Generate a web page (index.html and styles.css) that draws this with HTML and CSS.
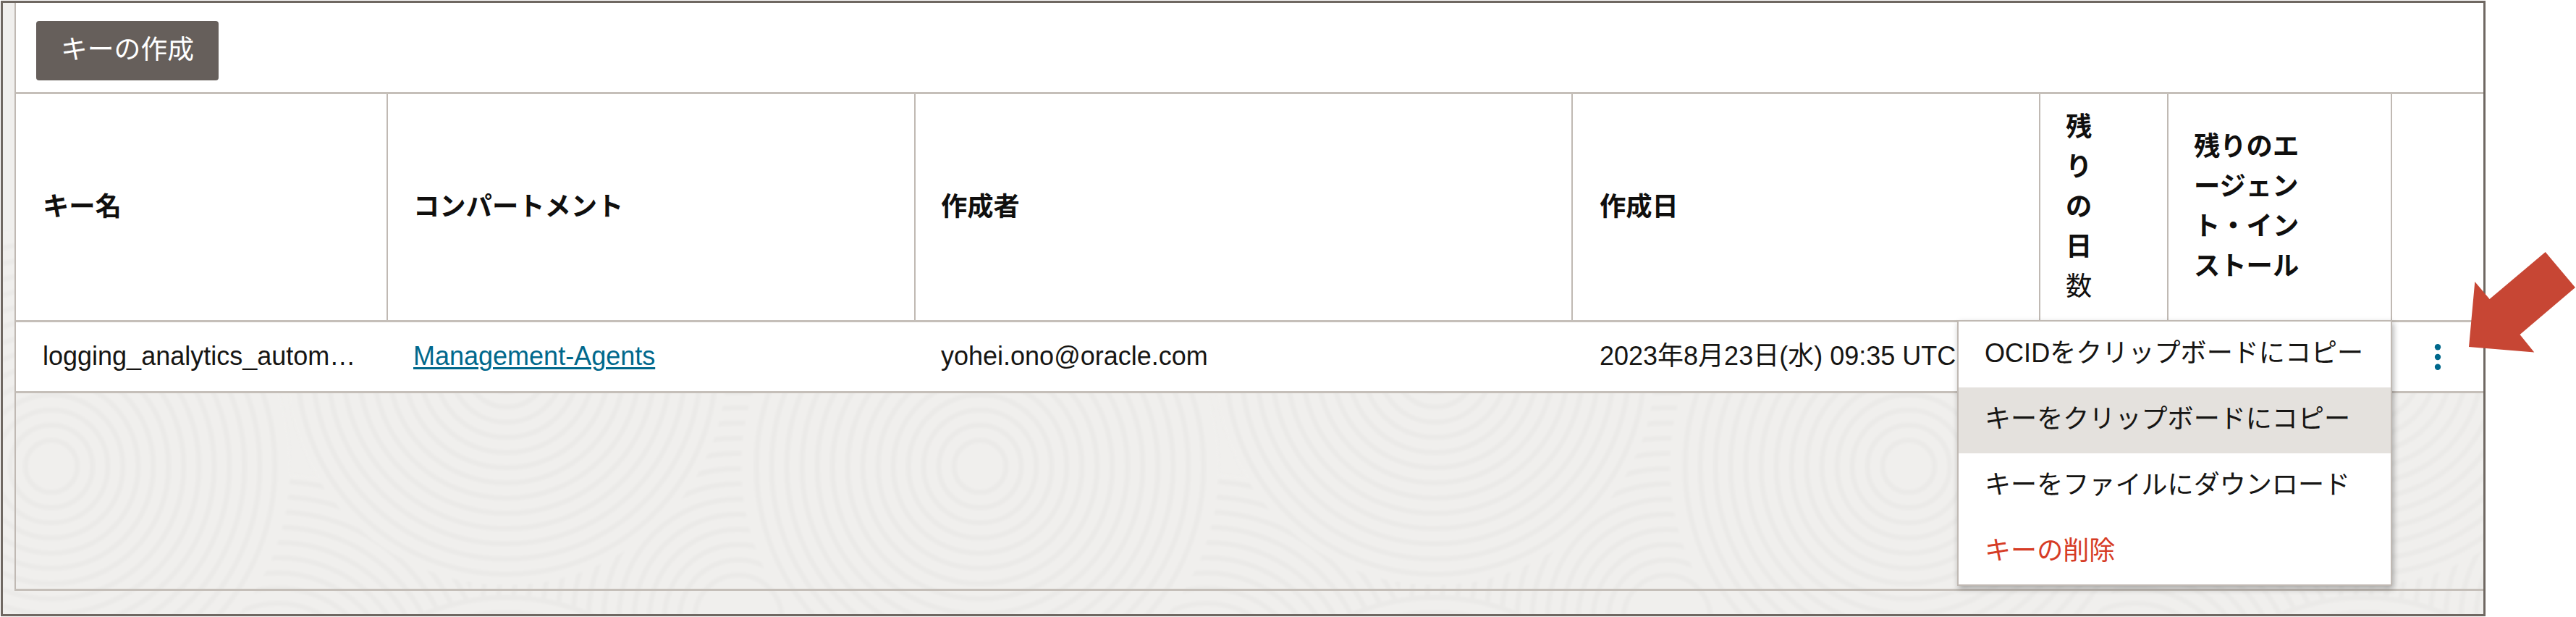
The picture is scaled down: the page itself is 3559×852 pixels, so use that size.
FILE: index.html
```
<!DOCTYPE html>
<html lang="ja">
<head>
<meta charset="utf-8">
<title>キー</title>
<link rel="stylesheet" href="styles.css">
</head>
<body>
<div class="window">
  <svg class="texture" width="3430" height="848" aria-hidden="true"><g id="texture-rings"></g></svg>
  <section class="panel">
    <div class="toolbar"><button class="create">キーの作成</button></div>
    <div class="row head">
      <div class="cell">キー名</div>
      <div class="cell">コンパートメント</div>
      <div class="cell">作成者</div>
      <div class="cell">作成日</div>
      <div class="cell"><div>残<br>り<br>の<br>日<br><span class="thin">数</span></div></div>
      <div class="cell"><div>残りのエ<br>ージェン<br>ト・イン<br>ストール</div></div>
      <div class="cell"></div>
    </div>
    <div class="row data">
      <div class="cell">logging_analytics_autom…</div>
      <div class="cell"><a class="link" href="#">Management-Agents</a></div>
      <div class="cell">yohei.ono@oracle.com</div>
      <div class="cell">2023年8月23日(水) 09:35 UTC</div>
      <div class="cell"></div>
      <div class="cell"></div>
      <div class="cell actions">
        <svg width="10" height="38" viewBox="0 0 10 38"><g fill="#00688c"><circle cx="5" cy="5.300" r="4.200"/><circle cx="5" cy="19" r="4.200"/><circle cx="5" cy="32.700" r="4.200"/></g></svg>
      </div>
    </div>
  </section>
</div>
<div class="menu">
  <div class="item">OCIDをクリップボードにコピー</div>
  <div class="item active">キーをクリップボードにコピー</div>
  <div class="item">キーをファイルにダウンロード</div>
  <div class="item danger">キーの削除</div>
</div>
<svg class="arrow" width="149" height="140" viewBox="3410 347 149 140"><path fill="#c74634" d="M3516.700 348 3558 397 3481.500 462 3501.300 486.500 3411 479 3419.300 389 3439.600 413Z"/></svg>
<script src="texture.js"></script>
</body>
</html>
```

FILE: styles.css
```
body {
  margin: 0;
  width: 3559px;
  height: 852px;
  position: relative;
  overflow: hidden;
  background: #fff;
  color: #161513;
  font: 36px/55px "Liberation Sans", "Noto Sans CJK JP", sans-serif;
}
.window {
  box-sizing: border-box;
  width: 3433px;
  height: 850px;
  margin: 1px 0 0 1px;
  border: 3px solid #6f6862;
  background: #f0efed;
  position: relative;
  overflow: hidden;
}
.texture { position: absolute; left: 0; top: 0; filter: blur(1.5px); }
.texture circle { fill: none; stroke: #ebeae8; stroke-width: 7; }
.texture .disc { fill: #f0efed; stroke: none; }
.panel {
  box-sizing: border-box;
  position: relative;
  height: 812px;
  margin-left: 16px;
  border-left: 2px solid #c0b9b3;
  border-bottom: 3px solid #c5bfb9;
}
.toolbar {
  box-sizing: border-box;
  height: 126px;
  padding: 25px 28px;
  background: #fff;
  border-bottom: 3px solid #c5bfb9;
}
.create {
  display: block;
  width: 252px;
  height: 82px;
  padding: 0 0 4px;
  border: 0;
  border-radius: 4px;
  background: #665f5b;
  color: #fff;
  font: inherit;
  font-size: 36.8px;
}
.row {
  display: grid;
  grid-template-columns: 514px 729px 908px 646px 177px 309px 1fr;
  box-sizing: border-box;
  background: #fff;
  border-bottom: 3px solid #c5bfb9;
}
.head { height: 315px; font-size: 36.3px; font-weight: 700; color: #100f0e; }
.data { height: 98px; }
.cell {
  display: flex;
  align-items: center;
  padding: 0 0 2px 35px;
  white-space: nowrap;
}
.cell:first-child, .cell:nth-child(4) { padding-left: 37px; }
.head .cell { border-right: 2px solid #c0b9b3; }
.head .cell:last-child { border-right: 0; }
.thin { font-weight: 400; }
.link { color: #00688c; text-decoration-thickness: 3px; text-underline-offset: 3px; }
.data .actions { padding: 0; justify-content: center; }
.menu {
  box-sizing: border-box;
  position: absolute;
  left: 2704px;
  top: 442px;
  width: 601px;
  height: 367px;
  border: 2px solid #c0b9b3;
  background: #fff;
  box-shadow: 2px 4px 8px rgba(0, 0, 0, .3);
}
.item { height: 91px; line-height: 88px; padding-left: 36px; font-size: 36.1px; white-space: nowrap; }
.active { background: #e4e1dd; }
.danger { color: #d63b25; }
.arrow { position: absolute; left: 3410px; top: 347px; }
```

FILE: texture.js
```
// Overlapping discs of concentric rings, repeated across the window.
const root = document.getElementById('texture-rings');
const add = (cx, cy, r, cls) => {
  const c = document.createElementNS('http://www.w3.org/2000/svg', 'circle');
  c.setAttribute('cx', cx);
  c.setAttribute('cy', cy);
  c.setAttribute('r', r);
  if (cls) c.setAttribute('class', cls);
  root.appendChild(c);
};
const disc = (cx, cy, radius, inner = 16) => {
  add(cx, cy, radius, 'disc');
  for (let r = inner; r < radius; r += 21) add(cx, cy, r);
};
for (let x = -1283; x < 4500; x += 1283) {
  disc(x + 1016, 850, 400, 60);
  disc(x + 380, 950, 300);
  disc(x + 696, 1110, 290);
}
for (let x = -1283; x < 4500; x += 1283) {
  disc(x + 67, 640, 330, 36);
  disc(x + 696, 500, 304);
}
```
